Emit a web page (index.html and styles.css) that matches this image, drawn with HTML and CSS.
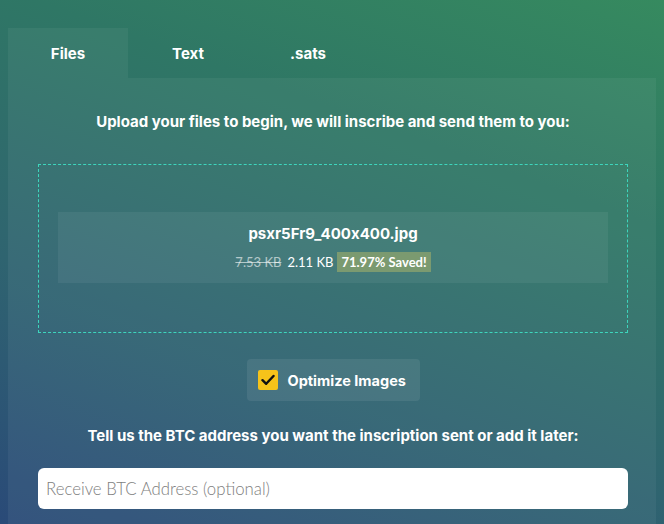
FILE: index.html
```html
<!DOCTYPE html>
<html>
<head>
<meta charset="utf-8">
<link rel="stylesheet" href="styles.css">
</head>
<body>
<div class="page">
  <div class="tabs">
    <div class="tab active">Files</div>
    <div class="tab">Text</div>
    <div class="tab">.sats</div>
  </div>
  <div class="panel">
    <h2 class="heading">Upload your files to begin, we will inscribe and send them to you:</h2>
    <div class="dropzone">
      <div class="filecard">
        <div class="filename">psxr5Fr9_400x400.jpg</div>
        <div class="sizes">
          <span class="old">7.53 KB</span>
          <span class="new">2.11 KB</span>
          <span class="badge">71.97% Saved!</span>
        </div>
      </div>
    </div>
    <div class="optrow">
      <label class="optbtn">
        <span class="check">
          <svg width="14" height="12" viewBox="0 0 14 12"><path d="M1.5 6.2 L5.2 9.8 L12.5 2" fill="none" stroke="#111" stroke-width="2.4" stroke-linecap="round" stroke-linejoin="round"/></svg>
        </span>
        <span class="optlabel">Optimize Images</span>
      </label>
    </div>
    <h3 class="heading2">Tell us the BTC address you want the inscription sent or add it later:</h3>
    <input class="addr" type="text" placeholder="Receive BTC Address (optional)">
  </div>
</div>
</body>
</html>
```

FILE: styles.css
```css
html, body {
  margin: 0;
  padding: 0;
  height: 100%;
}
body {
  background: linear-gradient(200deg, #368a5f 0%, #2f7765 30%, #2f6470 65%, #2a4a78 100%);
  font-family: Inter, Lato, sans-serif;
  font-feature-settings: "calt" 0;
  color: #fff;
  overflow: hidden;
}
.page {
  padding: 28px 8px 0 8px;
}
.tabs {
  display: flex;
  height: 50px;
}
.tab {
  width: 120px;
  display: flex;
  align-items: center;
  justify-content: center;
  font-weight: 700;
  font-size: 15px;
}
.tab.active {
  background: rgba(255, 255, 255, 0.05);
}
.panel {
  background: rgba(255, 255, 255, 0.05);
  padding: 0 28px 30px 30px;
  min-height: 420px;
}
.heading {
  margin: 0;
  padding-top: 34px;
  font-size: 15px;
  font-weight: 700;
  text-align: center;
  line-height: 20px;
}
.dropzone {
  margin-top: 32px;
  border: 1px dashed #3dd6bd;
  height: 167px;
  padding: 0 19px;
  display: flex;
  align-items: center;
}
.filecard {
  flex: 1;
  height: 71px;
  margin-top: -2px;
  background: rgba(255, 255, 255, 0.06);
  display: flex;
  flex-direction: column;
  align-items: center;
  justify-content: center;
}
.filename {
  font-weight: 700;
  font-size: 15px;
  line-height: 20px;
}
.sizes {
  margin-top: 8px;
  display: flex;
  align-items: center;
  gap: 6px;
  font-family: Lato, sans-serif;
  font-size: 13px;
}
.old {
  text-decoration: line-through;
  color: rgba(255, 255, 255, 0.6);
}
.badge {
  background: #7b9a70;
  font-weight: 700;
  padding: 2px 4px;
  margin-left: -2px;
}
.optrow {
  display: flex;
  justify-content: center;
  margin-top: 26px;
}
.optbtn {
  display: flex;
  align-items: center;
  gap: 10px;
  background: rgba(255, 255, 255, 0.08);
  border-radius: 4px;
  height: 42px;
  padding: 0 12px 0 11px;
  width: 150px;
}
.check {
  width: 20px;
  height: 20px;
  background: #f6c31a;
  border-radius: 2px;
  display: flex;
  align-items: center;
  justify-content: center;
}
.optlabel {
  font-weight: 700;
  font-size: 14.5px;
}
.heading2 {
  margin: 0;
  margin-top: 25px;
  font-size: 15px;
  font-weight: 700;
  text-align: center;
  line-height: 20px;
}
.addr {
  display: block;
  box-sizing: border-box;
  margin-top: 22px;
  width: 100%;
  height: 41px;
  border: none;
  border-radius: 6px;
  background: #fff;
  padding: 0 8px;
  font-family: Lato, sans-serif;
  font-weight: 300;
  font-size: 16.8px;
  color: #333;
  outline: none;
}
.addr::placeholder {
  color: #7e7e7e;
}
```
